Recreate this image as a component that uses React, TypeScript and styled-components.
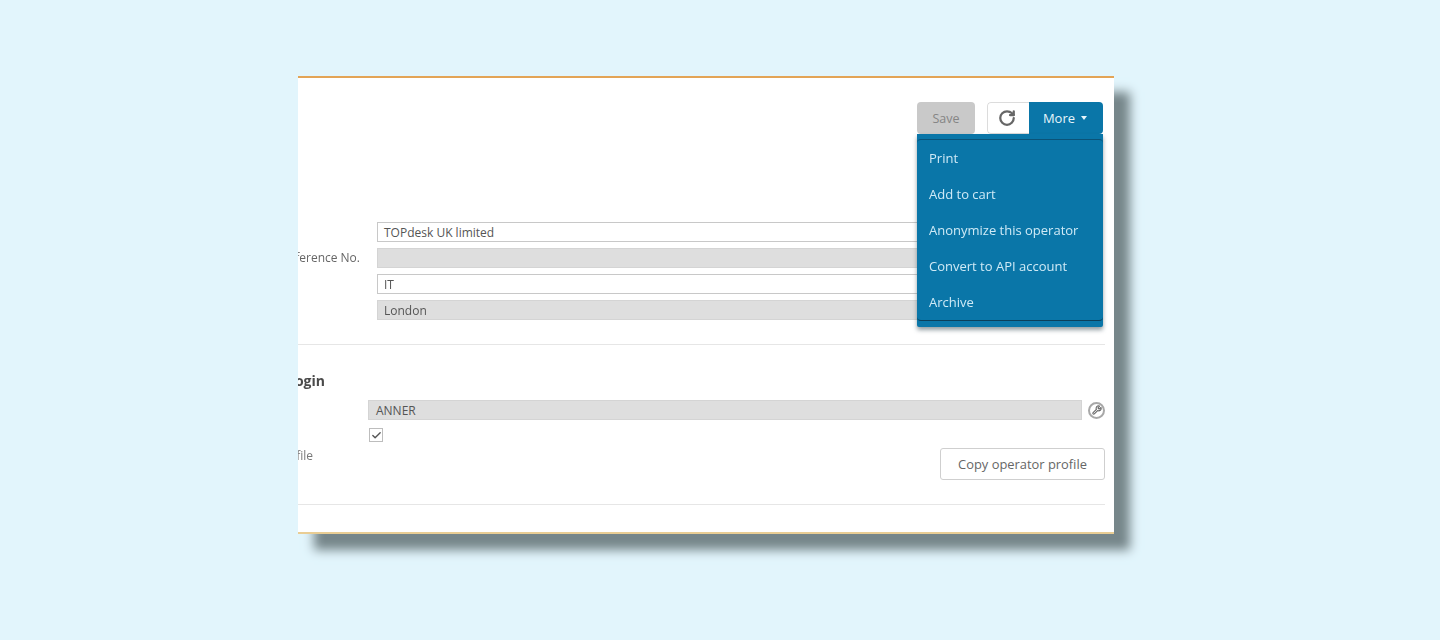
import React from "react";
import styled, { createGlobalStyle } from "styled-components";
import { RotateCw, Wrench, Check } from "lucide-react";

const Global = createGlobalStyle`
  html, body { margin: 0; padding: 0; background: #e2f5fc; }
  body { font-family: "Open Sans", "Liberation Sans", sans-serif; }
`;

const Page = styled.div`
  width: 1440px;
  height: 640px;
  padding: 76px 0 0 298px;
  box-sizing: border-box;
  overflow: hidden;
`;

const Panel = styled.div`
  width: 816px;
  height: 458px;
  box-sizing: border-box;
  background: #fff;
  border-top: 2px solid #e3a456;
  border-bottom: 2px solid #e9cd94;
  padding: 24px 9px 0 0;
  box-shadow: 16px 16px 10px #76868a;
  overflow: hidden;
  color: #555;
  font-size: 12px;
  filter: blur(0.5px);
`;

const Toolbar = styled.div`
  display: flex;
  justify-content: flex-end;
  gap: 12px;
  padding-right: 2px;
  height: 32px;
  position: relative;
`;

const SaveButton = styled.button`
  width: 58px;
  height: 32px;
  padding: 0;
  border: none;
  border-radius: 4px;
  background: #c9c9c9;
  color: #858585;
  font: inherit;
  font-size: 12.5px;
`;

const ButtonGroup = styled.div`
  display: flex;
  width: 116px;
  height: 32px;
  border-radius: 4px;
  overflow: hidden;
`;

const RefreshButton = styled.button`
  width: 42px;
  padding: 0 3px 0 0;
  display: flex;
  align-items: center;
  justify-content: center;
  background: #fff;
  border: 1px solid #dcdcdc;
  border-right: none;
  border-radius: 4px 0 0 4px;
  color: #666;
`;

const MoreButton = styled.button`
  flex: 1;
  padding: 0 2px 0 0;
  display: flex;
  align-items: center;
  justify-content: center;
  gap: 6px;
  background: #0a76a8;
  border: none;
  color: #e6f5fb;
  font: inherit;
  font-size: 13px;
`;

const Caret = styled.span`
  width: 0;
  height: 0;
  border-left: 3.5px solid transparent;
  border-right: 3.5px solid transparent;
  border-top: 4px solid #e6f5fb;
`;

const Dropdown = styled.div`
  position: absolute;
  top: 32px;
  right: 2px;
  width: 186px;
  padding: 5px 0 6px;
  background: #0a76a8;
  box-shadow: 0 3px 4px rgba(60, 80, 90, 0.55);
  border-radius: 0 0 2px 2px;
  z-index: 2;
`;

const MenuList = styled.ul`
  list-style: none;
  margin: 0;
  padding: 0;
  border-top: 1px solid #0a5378;
  border-bottom: 1px solid #0b3f5a;
  border-radius: 4px;
`;

const MenuItem = styled.li`
  height: 36px;
  line-height: 36px;
  padding-left: 12px;
  color: #cfeaf6;
  font-size: 13px;
`;

const Fields = styled.div`
  display: flex;
  flex-direction: column;
  gap: 6px;
  margin: 88px 30px 0 0;
`;

const Row = styled.div<{ $label: number; $gap: number }>`
  display: grid;
  grid-template-columns: ${(p) => p.$label}px 1fr;
  column-gap: ${(p) => p.$gap}px;
  align-items: center;
`;

const Label = styled.div`
  display: flex;
  justify-content: flex-end;
  overflow: hidden;
  white-space: nowrap;
  color: #666;
  font-size: 12px;
  margin-bottom: 2px;
`;

const Input = styled.div<{ $disabled?: boolean }>`
  height: 20px;
  line-height: 20px;
  box-sizing: border-box;
  padding-left: 6px;
  font-size: 12px;
  color: #555;
  background: ${(p) => (p.$disabled ? "#dedede" : "#fff")};
  border: 1px solid ${(p) => (p.$disabled ? "#d4d4d4" : "#c8c8c8")};
`;

const Divider = styled.div<{ $top: number }>`
  height: 1px;
  margin-top: ${(p) => p.$top}px;
  background: #e6e6e6;
`;

const Heading = styled.div`
  display: flex;
  justify-content: flex-end;
  width: 27px;
  overflow: hidden;
  margin-top: 26px;
  height: 20px;
  line-height: 20px;
  font-size: 14px;
  font-weight: 700;
  color: #4a4a4a;
`;

const LoginRow = styled.div`
  display: flex;
  align-items: center;
  margin: 9px 0 0 70px;
`;

const LoginInput = styled(Input)`
  width: 714px;
  padding-left: 7px;
`;

const KeyIcon = styled.span`
  width: 13px;
  height: 13px;
  margin-left: 6px;
  display: flex;
  align-items: center;
  justify-content: center;
  border: 2px solid #a8a8a8;
  border-radius: 50%;
  color: #666;
`;

const Checkbox = styled.span`
  display: flex;
  align-items: center;
  justify-content: center;
  width: 12px;
  height: 12px;
  margin: 8px 0 0 71px;
  border: 1px solid #bdbdbd;
  color: #555;
`;

const ProfileRow = styled.div`
  display: flex;
  justify-content: space-between;
  align-items: flex-start;
  margin-top: 6px;
`;

const ProfileLabel = styled(Label)`
  width: 15px;
  margin: 0;
  line-height: 16px;
  color: #777;
`;

const CopyButton = styled.button`
  width: 165px;
  height: 32px;
  padding: 0;
  background: #fff;
  border: 1px solid #cfcfcf;
  border-radius: 3px;
  color: #666;
  font: inherit;
  font-size: 12.9px;
`;

export default function App() {
  return (
    <Page>
      <Global />
      <Panel>
        <Toolbar>
          <SaveButton>Save</SaveButton>
          <ButtonGroup>
            <RefreshButton>
              <RotateCw size={18} strokeWidth={3} />
            </RefreshButton>
            <MoreButton>
              More <Caret />
            </MoreButton>
          </ButtonGroup>
          <Dropdown>
            <MenuList>
              {["Print", "Add to cart", "Anonymize this operator", "Convert to API account", "Archive"].map((t) => (
                <MenuItem key={t}>{t}</MenuItem>
              ))}
            </MenuList>
          </Dropdown>
        </Toolbar>
        <Fields>
          <Row $label={62} $gap={17}>
            <span />
            <Input>TOPdesk UK limited</Input>
          </Row>
          <Row $label={62} $gap={17}>
            <Label>Reference No.</Label>
            <Input $disabled />
          </Row>
          <Row $label={62} $gap={17}>
            <span />
            <Input>IT</Input>
          </Row>
          <Row $label={62} $gap={17}>
            <span />
            <Input $disabled>London</Input>
          </Row>
        </Fields>
        <Divider $top={24} />
        <Heading>Login</Heading>
        <LoginRow>
          <LoginInput $disabled>ANNER</LoginInput>
          <KeyIcon>
            <Wrench size={10} strokeWidth={2.6} />
          </KeyIcon>
        </LoginRow>
        <Checkbox>
          <Check size={11} strokeWidth={3} />
        </Checkbox>
        <ProfileRow>
          <ProfileLabel>Profile</ProfileLabel>
          <CopyButton>Copy operator profile</CopyButton>
        </ProfileRow>
        <Divider $top={24} />
      </Panel>
    </Page>
  );
}
